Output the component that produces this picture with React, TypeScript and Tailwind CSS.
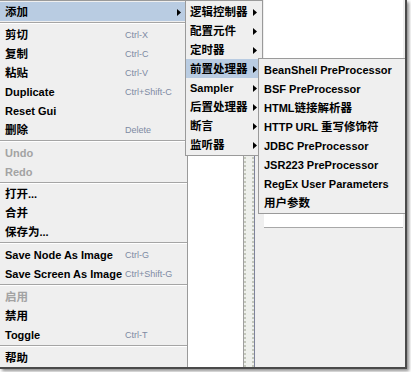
type Entry = {
  label?: string;
  shortcut?: string;
  disabled?: boolean;
  arrow?: boolean;
  active?: boolean;
  sep?: string;
};

const mainItems: Entry[] = [
  { label: "添加", arrow: true, active: true },
  { sep: "h-[4px]" },
  { label: "剪切", shortcut: "Ctrl-X" },
  { label: "复制", shortcut: "Ctrl-C" },
  { label: "粘贴", shortcut: "Ctrl-V" },
  { label: "Duplicate", shortcut: "Ctrl+Shift-C" },
  { label: "Reset Gui" },
  { label: "删除", shortcut: "Delete" },
  { sep: "h-[4px]" },
  { label: "Undo", disabled: true },
  { label: "Redo", disabled: true },
  { sep: "h-[3px]" },
  { label: "打开..." },
  { label: "合并" },
  { label: "保存为..." },
  { sep: "h-[4px]" },
  { label: "Save Node As Image", shortcut: "Ctrl-G" },
  { label: "Save Screen As Image", shortcut: "Ctrl+Shift-G" },
  { sep: "h-[4px]" },
  { label: "启用", disabled: true },
  { label: "禁用" },
  { label: "Toggle", shortcut: "Ctrl-T" },
  { sep: "h-[4px]" },
  { label: "帮助" },
];

const addItems = [
  "逻辑控制器",
  "配置元件",
  "定时器",
  "前置处理器",
  "Sampler",
  "后置处理器",
  "断言",
  "监听器",
];

const preItems = [
  "BeanShell PreProcessor",
  "BSF PreProcessor",
  "HTML链接解析器",
  "HTTP URL 重写修饰符",
  "JDBC PreProcessor",
  "JSR223 PreProcessor",
  "RegEx User Parameters",
  "用户参数",
];

// CJK glyphs in the original are a touch bigger than the latin ones
const Label = ({ text }: { text: string }) => (
  <span className="whitespace-nowrap">
    {text.split(/([\u4e00-\u9fff]+)/).map((part, i) =>
      /[\u4e00-\u9fff]/.test(part) ? (
        <span key={i} className="text-[11.5px]">
          {part}
        </span>
      ) : (
        part
      )
    )}
  </span>
);

const Arrow = () => (
  <svg width="4" height="7" viewBox="0 0 4 7" className="shrink-0">
    <polygon points="0,0 4,3.5 0,7" fill="#000" />
  </svg>
);

const Separator = ({ h }: { h: string }) => (
  <div className={`${h} pt-[1px]`}>
    <div className="h-px bg-[#a5a5a5]" />
    <div className="h-px bg-white" />
  </div>
);

const App = () => (
  <div className="w-[411px] h-[372px] bg-white font-['Liberation_Sans','Noto_Sans_CJK_SC',sans-serif] text-[11px] font-bold text-black">
    <div className="relative w-[407px] h-[369px] overflow-hidden border-r-2 border-b-2 border-[#4a4a4a] bg-[#efefef] shadow-[2px_2px_3px_rgba(0,0,0,0.45)]">
      {/* background window */}
      <div className="flex h-full">
        <div className="w-[244px] shrink-0 bg-white border-r border-[#a0a0a0]" />
        <div className="w-[10px] shrink-0 bg-[#eef0ec] border-l-2 border-r-2 border-dotted border-l-[#c4c8bc] border-r-[#c4c8bc]" />
        <div className="w-px shrink-0 bg-[#7d8299]" />
        <div className="flex-1 pl-[9px] pr-[2px]">
          <div className="h-[228px] bg-white border-b border-[#a8a8a8]" />
        </div>
      </div>

      {/* main popup menu */}
      <div className="absolute left-0 top-0 w-[188px] bg-[#efefef] border-t border-r border-[#9a9a9a] pt-[1px]">
        {mainItems.map((item, i) =>
          item.sep ? (
            <Separator key={i} h={item.sep} />
          ) : (
            <div
              key={i}
              className={`flex h-[19px] items-center pl-[5px] pt-[2px] ${item.active ? "bg-[#b9cce2]" : ""} ${item.disabled ? "text-[#a3a3a3]" : ""}`}
            >
              <span className="w-[120px] shrink-0">
                <Label text={item.label ?? ""} />
              </span>
              {item.shortcut && (
                <span className="text-[9px] font-normal text-[#7d8aa3] whitespace-nowrap">{item.shortcut}</span>
              )}
              {item.arrow && (
                <span className="ml-auto mr-[6px] flex">
                  <Arrow />
                </span>
              )}
            </div>
          )
        )}
      </div>

      {/* 添加 submenu */}
      <div className="absolute left-[185px] top-0 w-[78px] bg-[#efefef] border border-[#9a9a9a] py-[1px]">
        {addItems.map((label, i) => (
          <div
            key={i}
            className={`flex h-[19px] items-center pl-[4px] pr-[5px] pt-[2px] ${label === "前置处理器" ? "bg-[#b9cce2]" : ""}`}
          >
            <Label text={label} />
            <span className="ml-auto flex">
              <Arrow />
            </span>
          </div>
        ))}
      </div>

      {/* 前置处理器 submenu */}
      <div className="absolute left-[258px] top-[58px] w-[148px] bg-[#efefef] border border-[#9a9a9a] py-[1px]">
        {preItems.map((label, i) => (
          <div key={i} className="flex h-[19px] items-center pl-[5px] pt-[2px]">
            <Label text={label} />
          </div>
        ))}
      </div>
    </div>
  </div>
);

export default App;
